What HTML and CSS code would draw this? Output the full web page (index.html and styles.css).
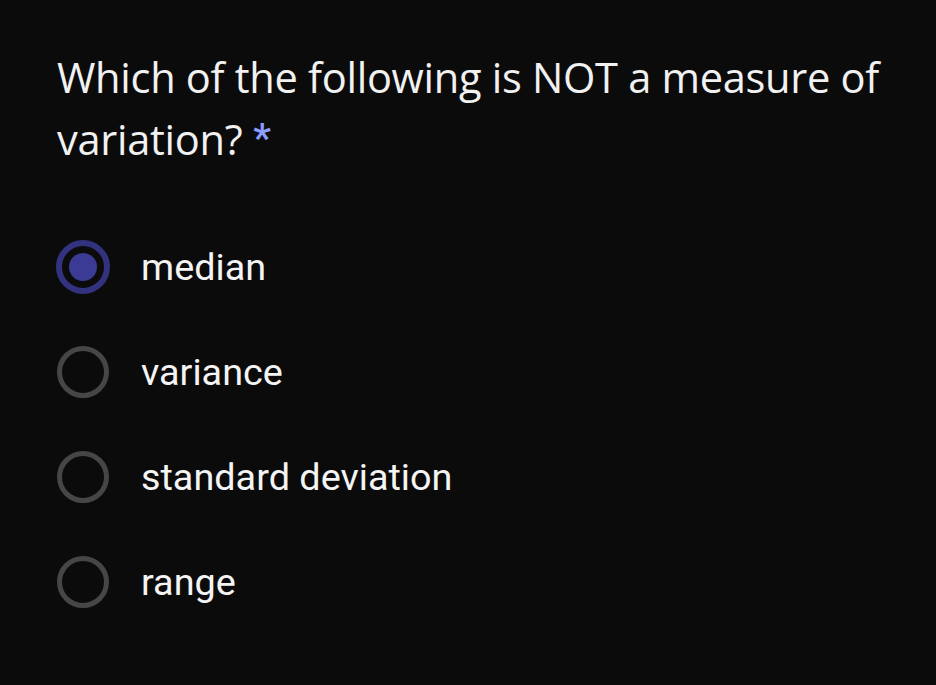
FILE: index.html
```html
<!DOCTYPE html>
<html>
<head>
<meta charset="utf-8">
<link rel="stylesheet" href="styles.css">
</head>
<body>
<main class="question">
  <h1 class="title">Which of the following is NOT a measure of variation?<span class="req">*</span></h1>
  <div class="options">
    <label class="option">
      <span class="radio checked"><span class="dot"></span></span>
      <span class="label">median</span>
    </label>
    <label class="option">
      <span class="radio"></span>
      <span class="label">variance</span>
    </label>
    <label class="option">
      <span class="radio"></span>
      <span class="label">standard deviation</span>
    </label>
    <label class="option">
      <span class="radio"></span>
      <span class="label">range</span>
    </label>
  </div>
</main>
</body>
</html>
```
FILE: styles.css
```css
html, body {
  margin: 0;
  padding: 0;
  background: #0b0b0b;
}
body {
  width: 936px;
  height: 685px;
  overflow: hidden;
}
.question {
  padding: 46px 30px 0 57px;
}
.title {
  margin: 0;
  font-family: "Open Sans", "Noto Sans", sans-serif;
  font-weight: 400;
  font-size: 41.6px;
  line-height: 62px;
  color: #f1f1f1;
  letter-spacing: -0.3px;
}
.req {
  display: inline-block;
  margin-left: 11px;
  color: #8c9cff;
  font-family: Roboto, sans-serif;
  font-weight: 500;
  font-size: 40px;
  line-height: 40px;
  vertical-align: 3px;
}
.options {
  display: flex;
  flex-direction: column;
  gap: 53px;
  margin-top: 71px;
}
.option {
  display: flex;
  align-items: center;
  gap: 32px;
  height: 52px;
}
.radio {
  box-sizing: border-box;
  width: 52px;
  height: 52px;
  border-radius: 50%;
  border: 5px solid #474545;
  display: flex;
  align-items: center;
  justify-content: center;
  flex: none;
}
.radio.checked {
  width: 54px;
  height: 54px;
  margin: -1px;
  border: 6px solid #32327f;
}
.dot {
  width: 28px;
  height: 28px;
  border-radius: 50%;
  background: #3b3b96;
}
.label {
  font-family: Roboto, "Noto Sans", sans-serif;
  font-size: 37.8px;
  color: #f4f4f4;
  line-height: 44px;
}
```
